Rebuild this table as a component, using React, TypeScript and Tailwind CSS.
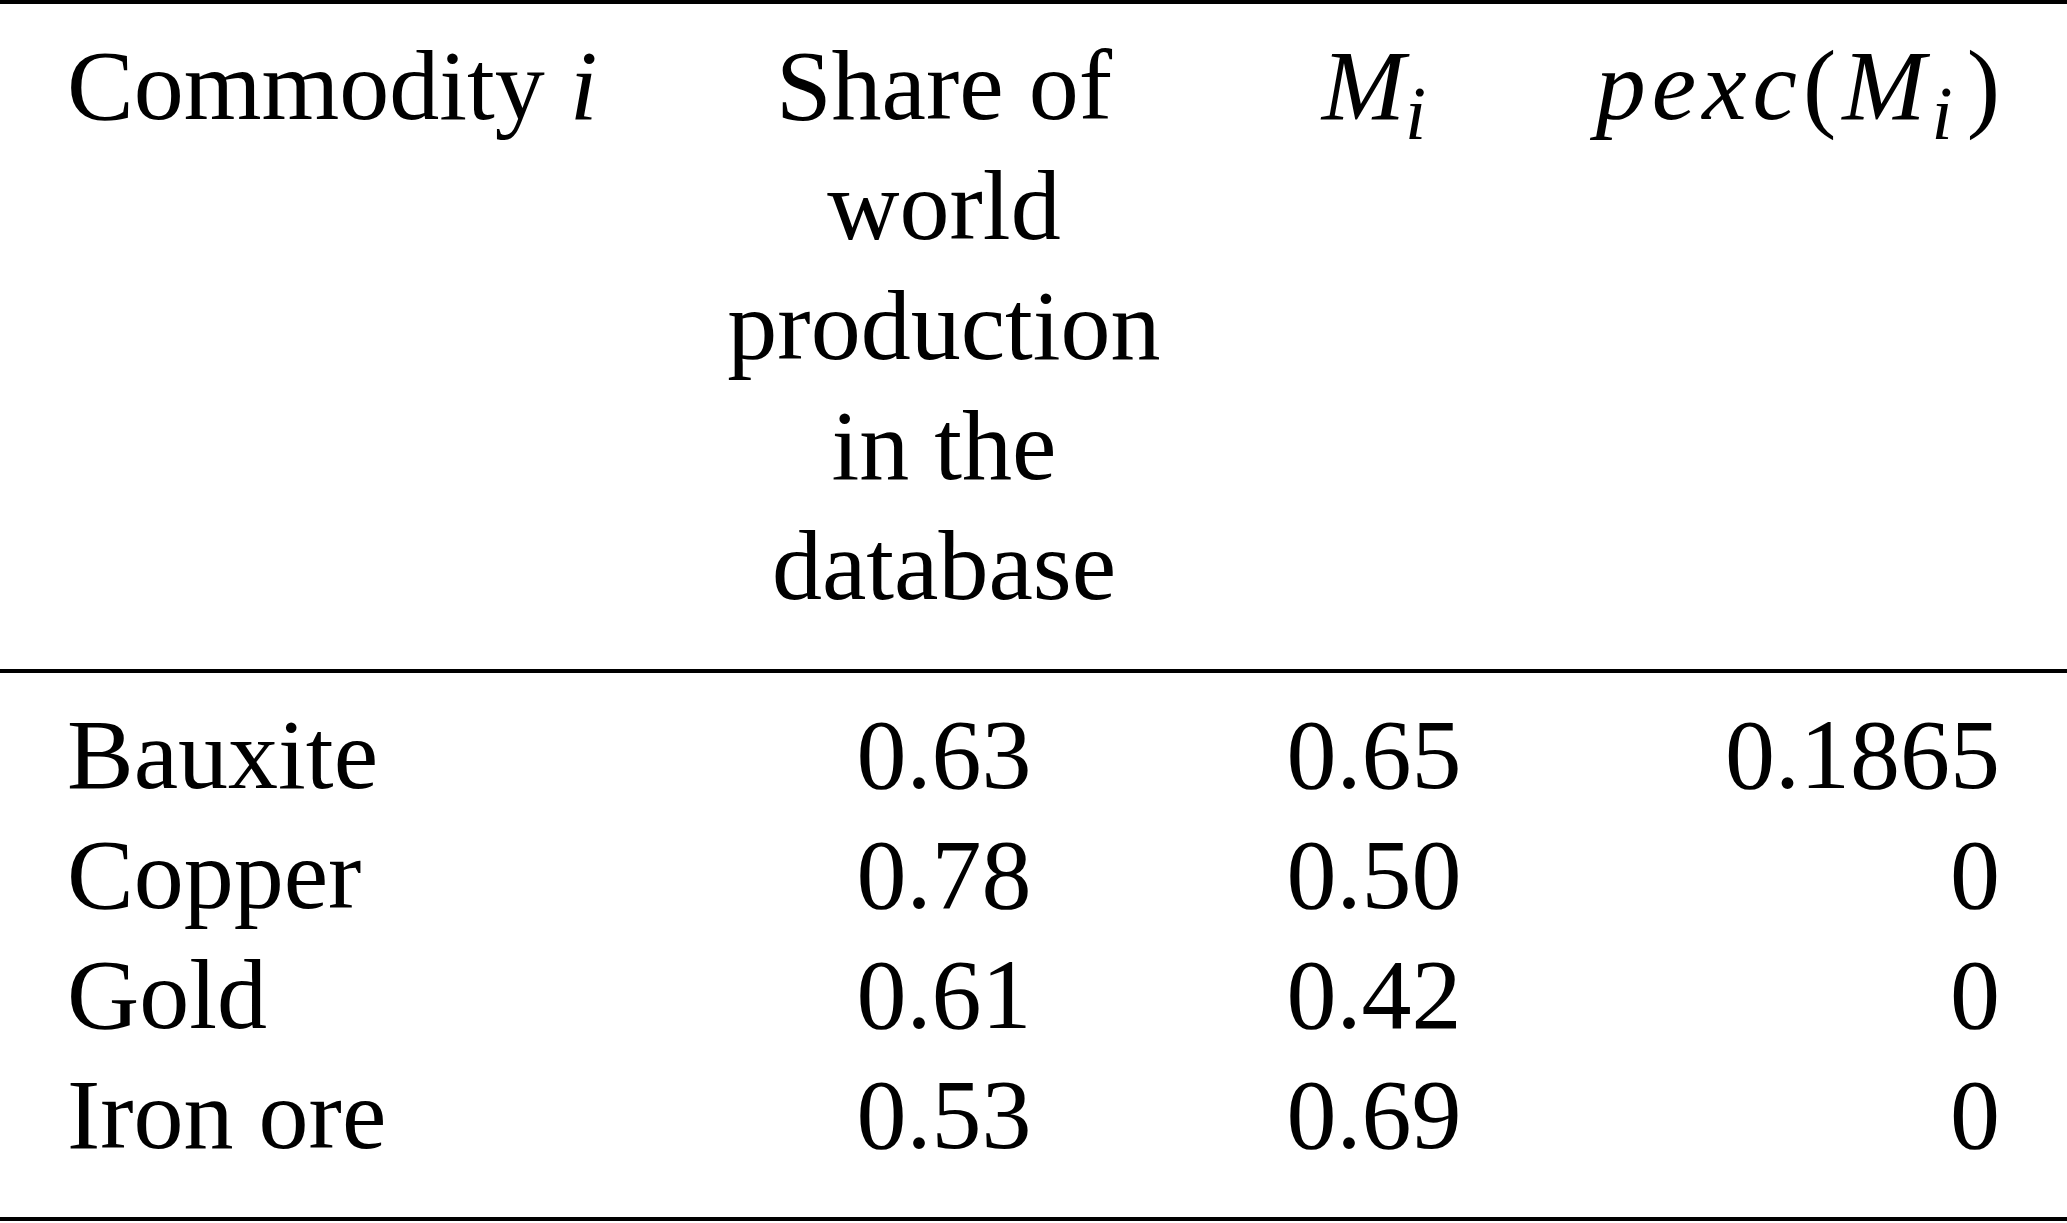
import React from "react";

const Sub = ({ children }: { children: React.ReactNode }) => (
  <span className="relative top-[20px] text-[76px] leading-none italic">{children}</span>
);

const rows: [string, string, string, string][] = [
  ["Bauxite", "0.63", "0.65", "0.1865"],
  ["Copper", "0.78", "0.50", "0"],
  ["Gold", "0.61", "0.42", "0"],
  ["Iron ore", "0.53", "0.69", "0"],
];

export default function App() {
  return (
    <div className="w-[2067px] h-[1223px] bg-white text-black font-['Liberation_Serif','Times_New_Roman',serif] text-[100px] leading-[120px] overflow-hidden">
      <div className="h-[4px] bg-black" />
      <div className="grid grid-cols-[653px_448px_412px_420px] pl-[67px] pr-[67px] pt-[22px] pb-[43px] items-start">
        <div className="whitespace-nowrap">
          Commodity <span className="italic">i</span>
        </div>
        <div className="text-center">
          Share of
          <br />
          world
          <br />
          production
          <br />
          in the
          <br />
          database
        </div>
        <div className="text-center whitespace-nowrap">
          <span className="italic">M</span>
          <Sub>i</Sub>
        </div>
        <div className="text-right whitespace-nowrap">
          <span className="tracking-[6px]">
            <span className="italic">pexc</span>(<span className="italic">M</span>
            <Sub>i</Sub>
          </span>
          <span className="pl-[8px]">)</span>
        </div>
      </div>
      <div className="h-[4px] bg-black" />
      <div className="grid grid-cols-[653px_448px_412px_420px] pl-[67px] pr-[67px] pt-[22px] pb-[42px]">
        {rows.map((r) => (
          <React.Fragment key={r[0]}>
            <div className="whitespace-nowrap">{r[0]}</div>
            <div className="text-center">{r[1]}</div>
            <div className="text-center">{r[2]}</div>
            <div className="text-right">{r[3]}</div>
          </React.Fragment>
        ))}
      </div>
      <div className="h-[4px] bg-black" />
    </div>
  );
}
